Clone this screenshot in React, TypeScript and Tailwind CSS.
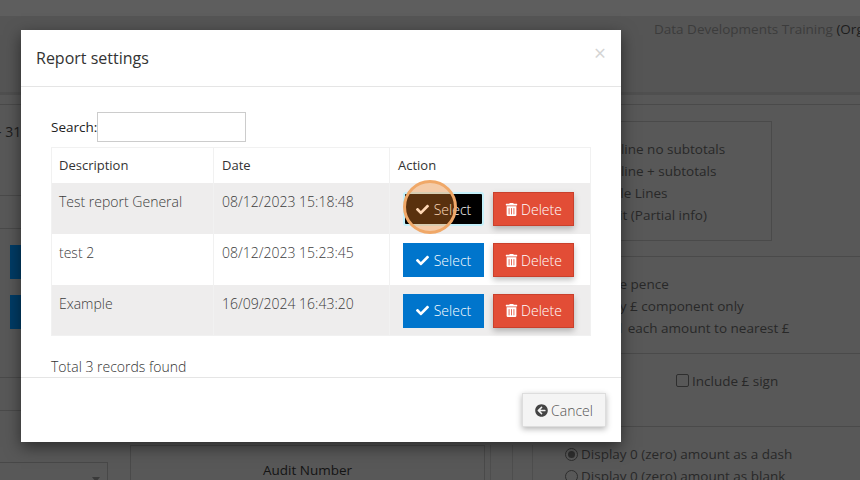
import { FaArrowCircleLeft, FaCheck, FaTrashAlt } from "react-icons/fa";

const rows = [
  { name: "Test report General", date: "08/12/2023 15:18:48", shade: true, active: true },
  { name: "test 2", date: "08/12/2023 15:23:45", shade: false, active: false },
  { name: "Example", date: "16/09/2024 16:43:20", shade: true, active: false },
];

function Background() {
  return (
    <div className="flex h-[480px] w-[860px] flex-col overflow-hidden bg-[#585858] text-[13.5px] text-[#2a2a2a]">
      <div className="h-4 shrink-0 bg-[#5e5e5e]" />
      <div className="h-[76px] shrink-0 bg-[#555555] pl-[654px] pt-[3px] whitespace-nowrap">
        <span className="text-[#3c3c3c]">Data Developments Training </span>
        <span className="text-[#1c1c1c]">(Organisation)</span>
      </div>
      <div className="h-[13px] shrink-0 border-t-[3px] border-b border-t-[#4f4f4f] border-b-[#4a4a4a]" />
      <div className="flex flex-1">
        <div className="flex w-[548px] shrink-0 flex-col">
          <div className="h-[91px] border-b border-[#4a4a4a] pt-[16px] text-[14px] text-[#1c1c1c]">
            <span className="-ml-[3px] block">- 31</span>
          </div>
          <div className="h-[33px] border-b border-[#4a4a4a]" />
          <div className="flex h-[149px] flex-col gap-4 border-b border-[#4a4a4a] pl-[10px] pt-4">
            <div className="h-[34px] w-20 bg-[#003c66]" />
            <div className="h-[34px] w-20 bg-[#003c66]" />
          </div>
          <div className="h-[33px] border-b border-[#4a4a4a]" />
          <div className="flex flex-1 pt-[34px]">
            <div className="relative mt-[17px] h-10 w-[108px] shrink-0 border-t border-r border-[#484848]">
              <span className="absolute right-[7px] top-[14px] h-0 w-0 border-x-[4px] border-t-[5px] border-x-transparent border-t-[#3a3a3a]" />
            </div>
            <div className="ml-[22px] h-12 w-[355px] shrink-0 border border-[#4a4a4a] pt-[15px] text-center leading-[18px] text-[#141414]">
              Audit Number
            </div>
            <div className="ml-[5px] h-12 w-[22px] shrink-0 border-l border-[#4e4e4e]" />
            <div className="h-12 w-[20px] shrink-0 border-l border-[#4e4e4e]" />
            <div className="h-12 flex-1 border-l border-[#4e4e4e]" />
          </div>
        </div>
        <div className="flex flex-1 flex-col whitespace-nowrap text-[#282828]">
          <div className="h-[152px] shrink-0 border-b border-[#4a4a4a] pt-4">
            <div className="h-[120px] w-[224px] border border-[#4a4a4a] pl-[31px] pt-4 leading-[22px]">
              <div>Single line no subtotals</div>
              <div>Single line + subtotals</div>
              <div>Multiple Lines</div>
              <div className="pl-[14px]">Audit (Partial info)</div>
            </div>
          </div>
          <div className="h-[97px] shrink-0 border-b border-[#4a4a4a] pl-[33px] pt-[16px] leading-[22px]">
            <div>Include pence</div>
            <div>Display £ component only</div>
            <div>
              <span className="mr-[2px]">Round</span> each amount to nearest £
            </div>
          </div>
          <div className="flex h-[73px] shrink-0 items-start gap-[3px] border-b border-[#4a4a4a] pl-[128px] pt-[17px]">
            <span className="mt-[3px] h-[13px] w-[13px] rounded-[2px] border border-[#2e2e2e]" />
            <span>Include £ sign</span>
          </div>
          <div className="flex flex-col pl-[17px] pt-[16px] leading-[22px]">
            <div className="flex items-center gap-[3px]">
              <span className="flex h-[13px] w-[13px] items-center justify-center rounded-full border border-[#2e2e2e]">
                <span className="h-[7px] w-[7px] rounded-full bg-[#2e2e2e]" />
              </span>
              <span>Display 0 (zero) amount as a dash</span>
            </div>
            <div className="flex items-center gap-[3px]">
              <span className="h-[13px] w-[13px] rounded-full border border-[#2e2e2e]" />
              <span>Display 0 (zero) amount as blank</span>
            </div>
          </div>
        </div>
      </div>
    </div>
  );
}

function Modal() {
  return (
    <div className="absolute left-[21px] top-[30px] flex h-[412px] w-[600px] flex-col bg-white text-[14px] text-[#333333] shadow-[0_5px_15px_rgba(0,0,0,0.5)]">
      <div className="flex h-[57px] shrink-0 items-center justify-between border-b border-[#e5e5e5] pl-[15px] pr-[15px]">
        <h4 className="text-[16px] leading-[20px] text-[#333333]">Report settings</h4>
        <span className="mb-[9px] text-[21px] font-normal leading-none text-[#d4d4d4]">×</span>
      </div>
      <div className="flex flex-1 flex-col pl-[30px] pr-[30px] pt-[25px]">
        <label className="flex h-[30px] items-center text-[13.5px] text-[#222222]">
          Search:
          <span className="h-[30px] w-[149px] border border-[#cccccc] bg-white" />
        </label>
        <table className="mt-[5px] w-[540px] table-fixed border-collapse border border-[#f1f1f1]">
          <thead>
            <tr className="h-[35px] text-left text-[13px]">
              <th className="w-[162px] border-r border-[#f1f1f1] pl-[7px] font-normal">Description</th>
              <th className="w-[176px] border-r border-[#f1f1f1] pl-2 font-normal">Date</th>
              <th className="pl-2 font-normal">Action</th>
            </tr>
          </thead>
          <tbody className="font-light text-[#3c3c3c]">
            {rows.map((r) => (
              <tr key={r.name} className={`h-[51px] ${r.shade ? "bg-[#eeeded]" : "bg-white"}`}>
                <td className="border-r border-[#f1f1f1] pl-[7px] pt-[8px] align-top">{r.name}</td>
                <td className="border-r border-[#f1f1f1] pl-2 pt-[8px] align-top">{r.date}</td>
                <td className="pl-[13px] pt-[2px]">
                  <div className="flex gap-[9px]">
                    <button
                      className={`flex h-[34px] w-[81px] items-center justify-center gap-[5px] text-white ${
                        r.active ? "rounded-[3px] border-2 border-[#c4f0fa] bg-black" : "bg-[#0075cc]"
                      }`}
                    >
                      <FaCheck className="text-[13px]" />
                      Select
                    </button>
                    <button className="flex h-[34px] w-[81px] items-center justify-center gap-[3px] border border-[#c9402c] bg-[#e24d36] text-white shadow-[0_3px_6px_rgba(0,0,0,0.25)]">
                      <FaTrashAlt className="text-[13px]" />
                      Delete
                    </button>
                  </div>
                </td>
              </tr>
            ))}
          </tbody>
        </table>
        <p className="mt-[21px] font-light leading-[20px] text-[#333333]">Total 3 records found</p>
      </div>
      <div className="flex h-[65px] shrink-0 items-start justify-end border-t border-[#e5e5e5] pr-[15px] pt-[15px]">
        <button className="flex h-[34px] w-[84px] items-center justify-center gap-[3px] border border-[#dddddd] bg-[#f4f4f4] font-light text-[#555555] shadow-[0_2px_6px_rgba(0,0,0,0.3)]">
          <FaArrowCircleLeft className="text-[13px] text-[#444444]" />
          Cancel
        </button>
      </div>
    </div>
  );
}

export default function App() {
  return (
    <div className="relative h-[480px] w-[860px] overflow-hidden font-['Open_Sans',sans-serif]">
      <Background />
      <Modal />
      <div className="absolute left-[403px] top-[180px] h-[54px] w-[54px] rounded-full border-[3px] border-[#f0a868] bg-[#ff8c28]/35" />
    </div>
  );
}
